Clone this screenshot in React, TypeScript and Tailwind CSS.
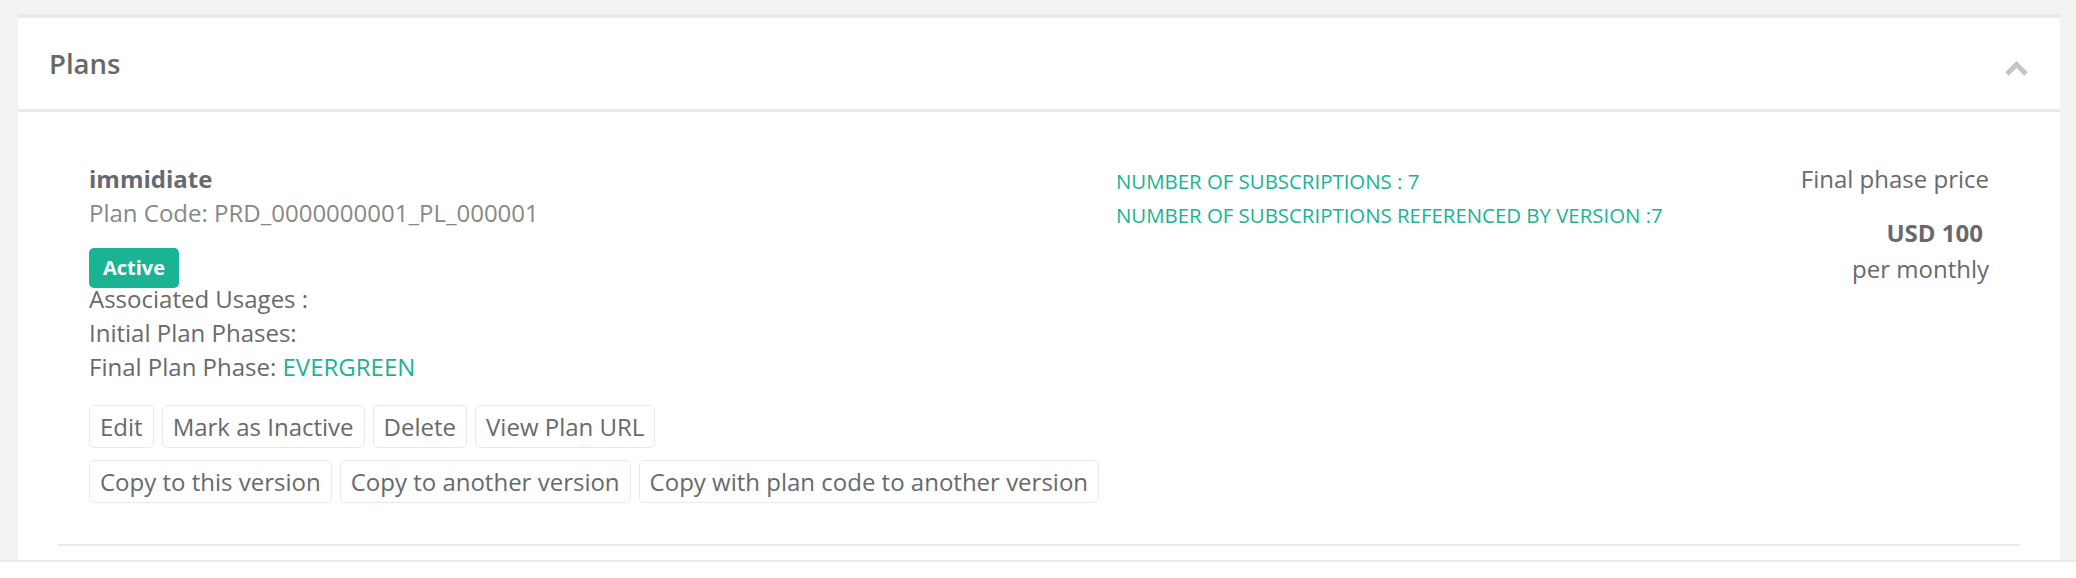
import React from 'react';

const buttonsTop = ['Edit', 'Mark as Inactive', 'Delete', 'View Plan URL'];
const buttonsBottom = ['Copy to this version', 'Copy to another version', 'Copy with plan code to another version'];

function PlanButton({ label }: { label: string }) {
  return (
    <button className="h-[43px] px-[10px] flex items-center border border-[#e7eaec] rounded-[5px] bg-white text-[24px] leading-[34px] text-[#676a6c]">
      {label}
    </button>
  );
}

export default function App() {
  return (
    <div className="min-h-screen bg-white font-['Open_Sans',sans-serif] text-[#676a6c]">
      <div className="bg-[#f3f3f3] pt-[14px] pl-[18px] pr-[16px] border-b-2 border-[#e7eaec]">
        <div className="bg-white border-t-4 border-[#e7eaec]">
          {/* header */}
          <div className="h-[94px] flex items-center justify-between pl-[31px] pr-[31px] border-b-[3px] border-[#e7eaec]">
            <h5 className="text-[27.5px] font-semibold text-[#676a6c]">Plans</h5>
            <svg width="25" height="18" viewBox="0 0 25 18" className="mt-[9px]">
              <polyline points="3,15 12.5,5.5 22,15" fill="none" stroke="#c4c4c4" strokeWidth="5" strokeLinejoin="miter" />
            </svg>
          </div>

          {/* plan list */}
          <div className="px-[40px] pt-[50px] pb-[14px]">
            <div className="flex px-[31px] pb-[41px] border-b-2 border-[#e7eaec]">
              <div className="w-[1027px] shrink-0">
                <div className="text-[24px] leading-[34px] font-bold">immidiate</div>
                <div className="text-[24px] leading-[34px] text-[#888888]">Plan Code: PRD_0000000001_PL_000001</div>
                <div className="mt-[18px] h-[34px]">
                  <div className="w-[90px] h-[40px] flex items-center justify-center rounded-[5px] bg-[#1ab394] text-white text-[20px] font-bold">
                    Active
                  </div>
                </div>
                <div className="text-[24px] leading-[34px]">Associated Usages :</div>
                <div className="text-[24px] leading-[34px]">Initial Plan Phases:</div>
                <div className="text-[24px] leading-[34px]">
                  Final Plan Phase: <span className="text-[#1ab394]">EVERGREEN</span>
                </div>
                <div className="mt-[21px] flex gap-[8px]">
                  {buttonsTop.map((b) => (
                    <PlanButton key={b} label={b} />
                  ))}
                </div>
                <div className="mt-[12px] flex gap-[8px]">
                  {buttonsBottom.map((b) => (
                    <PlanButton key={b} label={b} />
                  ))}
                </div>
              </div>
              <div className="flex-1 pt-[2px] text-[20.4px] leading-[34px] text-[#1ab394]">
                <div>NUMBER OF SUBSCRIPTIONS : 7</div>
                <div>NUMBER OF SUBSCRIPTIONS REFERENCED BY VERSION :7</div>
              </div>
              <div className="text-right text-[24px]">
                <div className="leading-[34px]">Final phase price</div>
                <div className="mt-[23px] leading-[28px] font-bold mr-[6px]">USD 100</div>
                <div className="mt-[5px] leading-[34px]">per monthly</div>
              </div>
            </div>
          </div>
        </div>
      </div>
    </div>
  );
}
